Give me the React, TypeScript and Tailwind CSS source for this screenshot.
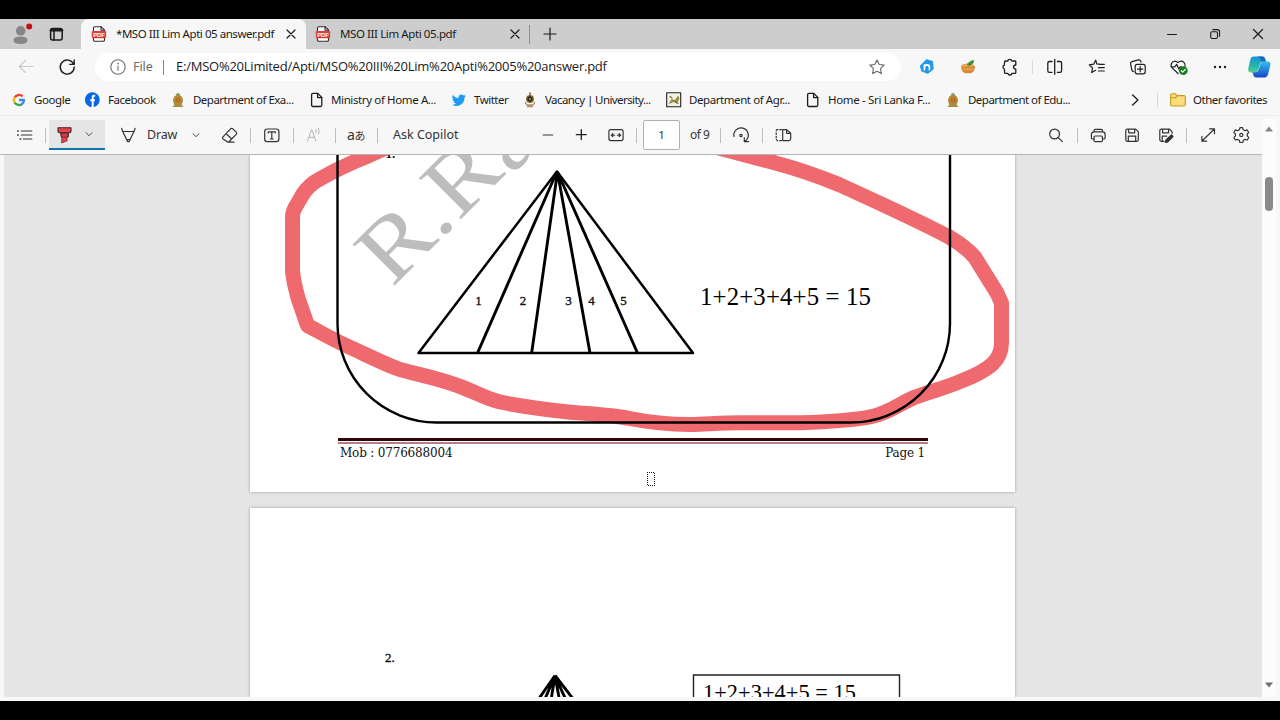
import type { ReactNode } from "react";

type IconProps = {
  cx: number;
  cy: number;
  size?: number;
  sw?: number;
  className?: string;
  children: ReactNode;
};

/* Icon whose drawing is written in window coordinates around its centre. */
function Icon({ cx, cy, size = 20, sw = 1.1, className = "", children }: IconProps) {
  const h = size / 2;
  return (
    <svg
      width={size}
      height={size}
      viewBox={`${cx - h} ${cy - h} ${size} ${size}`}
      fill="none"
      stroke="currentColor"
      strokeWidth={sw}
      strokeLinecap="round"
      strokeLinejoin="round"
      className={`shrink-0 ${className}`}
    >
      {children}
    </svg>
  );
}

function PdfIcon({ className }: { className: string }) {
  return (
    <Icon cx={99} cy={34} size={16} className={className}>
      <path d="M93.5 31V28q0-1.3 1.3-1.3h6.2l3.5 3.5V40q0 1.3-1.3 1.3h-8.4q-1.3 0-1.3-1.3z" fill="#fff" stroke="#33272a" />
      <path d="M101 26.7v3.5h3.5" stroke="#33272a" />
      <rect x="91.8" y="31" width="14.4" height="7.2" rx="1.2" fill="#dc3c46" stroke="none" />
      <text x="99" y="37" textAnchor="middle" fontSize="5.8" fontWeight="700" fill="#fff" stroke="none" fontFamily="Liberation Sans, sans-serif">PDF</text>
    </Icon>
  );
}

function CloseIcon({ className, r = 4 }: { className: string; r?: number }) {
  return (
    <Icon cx={0} cy={0} size={16} sw={1.2} className={className}>
      <path d={`M${-r} ${-r}L${r} ${r}M${r} ${-r}L${-r} ${r}`} />
    </Icon>
  );
}

function Crest({ className }: { className: string }) {
  return (
    <Icon cx={8} cy={8} size={16} className={className}>
      <path d="M4.5 4.5Q8 1.5 11.5 4.5L13 9l-1.5 5h-7L3 9z" fill="#9fa06b" stroke="none" />
      <circle cx="8" cy="3" r="2" fill="#8a9a70" stroke="none" />
      <circle cx="8" cy="7.8" r="4.2" fill="#c4862a" stroke="#a9883a" />
      <circle cx="8" cy="7.8" r="1.8" fill="#d97a2c" stroke="#8b5a2a" strokeWidth=".7" />
      <path d="M3.5 14.3h9M5.5 12.5h5" stroke="#a58d3b" strokeWidth="1.4" />
    </Icon>
  );
}

function SmallCrest({ className }: { className: string }) {
  return (
    <Icon cx={8} cy={8} size={16} className={className}>
      <path d="M8 1v2.5" stroke="#7b6243" strokeWidth="1.6" />
      <circle cx="8" cy="7" r="3.3" fill="#2e2a20" stroke="#8f6f3e" strokeWidth="1.3" />
      <circle cx="8" cy="7" r="1" fill="#c8a44a" stroke="none" />
      <path d="M3.6 10.5Q4 13 6 13h4q2 0 2.4-2.5M5.5 14.6h5" stroke="#b0916c" strokeWidth="1.5" />
    </Icon>
  );
}

function PageIcon({ className }: { className: string }) {
  return (
    <Icon cx={8} cy={8} size={16} sw={1.3} className={className}>
      <path d="M4 1.4h4.8l4 4V13q0 1.5-1.5 1.5H4Q2.6 14.5 2.6 13V2.8Q2.6 1.4 4 1.4z" />
      <path d="M8.6 1.6v4h4" />
    </Icon>
  );
}

function Rule({ className }: { className: string }) {
  return <div className={`w-px shrink-0 ${className}`} />;
}

function Label({ className, children }: { className: string; children: ReactNode }) {
  return <span className={`shrink-0 whitespace-nowrap ${className}`}>{children}</span>;
}

function Bookmark({ className, icon, children }: { className: string; icon: ReactNode; children: ReactNode }) {
  return (
    <div className={`flex shrink-0 items-center ${className}`}>
      {icon}
      <span className="whitespace-nowrap">{children}</span>
    </div>
  );
}

function TabStrip() {
  return (
    <div className="flex h-[30px] shrink-0 items-center bg-[#cdcdcd] text-[11.5px] text-[#1b1b1b]">
      <Icon cx={21} cy={34} size={24} className="ml-[9px]">
        <circle cx="20.7" cy="30.8" r="4.8" fill="#868686" stroke="none" />
        <path d="M13.5 40q0-3.5 7-3.5t7 3.5q0 4-7 4t-7-4z" fill="#868686" stroke="none" />
        <circle cx="29.2" cy="26.6" r="3" fill="#c80d16" stroke="none" />
      </Icon>
      <Icon cx={56} cy={34} sw={1.5} className="ml-[13px]">
        <rect x="50.6" y="28.4" width="11.6" height="11.6" rx="2" />
        <path d="M51 30.3h11" strokeWidth="2.6" />
        <path d="M54 31v9" />
      </Icon>
      <div className="ml-[15px] flex h-full w-[225px] shrink-0 items-center rounded-t-[8px] bg-[#f7f7f7]">
        <PdfIcon className="ml-[10px]" />
        <Label className="ml-[9px] w-[160px] tracking-[-0.45px]">*MSO III Lim Apti 05 answer.pdf</Label>
        <CloseIcon className="ml-[7px]" />
      </div>
      <PdfIcon className="ml-[9px]" />
      <Label className="ml-[9px] w-[160px] tracking-[-0.4px]">MSO III Lim Apti 05.pdf</Label>
      <CloseIcon className="ml-[7px]" />
      <Rule className="ml-[6px] h-[19px] bg-[#8f8f8f]" />
      <Icon cx={0} cy={0} size={16} sw={1.2} className="ml-[12px]">
        <path d="M-6 0H6M0-6V6" />
      </Icon>
      <Icon cx={0} cy={0} size={16} className="ml-auto">
        <path d="M-4.5 .5H4.5" />
      </Icon>
      <Icon cx={0} cy={0} size={16} className="ml-[27px]">
        <rect x="-4.3" y="-2.3" width="6.8" height="6.8" rx="1.5" />
        <path d="M-2.2-4.4H2.2Q4.6-4.4 4.6-2V2.3" />
      </Icon>
      <CloseIcon className="mr-[14px] ml-[27px]" r={4.5} />
    </div>
  );
}

function AddressRow() {
  return (
    <div className="flex h-9 shrink-0 items-center text-[#1f1f1f]">
      <Icon cx={26} cy={67} className="ml-[16px] text-[#c9c9c9]">
        <path d="M33 66.5H19.3M25.5 60.5l-6.3 6 6.3 6" />
      </Icon>
      <Icon cx={67} cy={67} sw={1.4} className="ml-[21px]">
        <path d="M73.6 64.2A7 7 0 1 0 74.2 67M74.2 60v4.4h-4.4" />
      </Icon>
      <div className="ml-[18px] flex h-7 w-[806px] shrink-0 items-center rounded-full bg-white">
        <Icon cx={118} cy={67} size={16} className="ml-[15px] text-[#6f6f6f]">
          <circle cx="118" cy="67" r="7.2" />
          <path d="M118 66v4.3" />
          <circle cx="118" cy="63.6" r=".4" />
        </Icon>
        <Label className="ml-[7px] w-[22px] text-[12.5px] tracking-[-0.1px] text-[#6a6a6a]">File</Label>
        <Rule className="ml-[8px] h-[15px] bg-[#858585]" />
        <Label className="ml-[12px] font-['Open_Sans','Noto_Sans',sans-serif] text-[13px] tracking-[-0.24px] text-[#1a1a1a]">
          E:/MSO%20Limited/Apti/MSO%20III%20Lim%20Apti%2005%20answer.pdf
        </Label>
        <Icon cx={0} cy={0} className="mr-[14px] ml-auto text-[#666]">
          <path d="M0-7.1 2.2-2.5 7.1-1.9 3.5 1.6 4.4 6.6 0 4.2-4.4 6.6-3.5 1.6-7.1-1.9-2.2-2.5z" />
        </Icon>
      </div>
      <Icon cx={927} cy={67} className="ml-[16px]">
        <path d="M926.500 59.800l6 1.800.6 7.500-5.500 4.200-5.600-2.200-1.600-5z" fill="#2199e8" stroke="#2199e8" />
        <path d="M924.400 65v4.600M924.400 67.400q.3-2.600 2.800-2.600 2.200 0 2.200 2.400v2.200" stroke="#fff" strokeWidth="1.700" />
      </Icon>
      <Icon cx={968} cy={67} className="ml-[21px]">
        <path d="M961 66.5h14q-.3 6.5-5 6.8h-4.3q-4.2-.3-4.7-6.8z" fill="#d98a35" stroke="none" />
        <path d="M961.5 66q1.5-2.6 4-1.4 2.4-2 4.6 0 2.8-1 4.4 1.6z" fill="#efc24a" stroke="#dc7a3c" strokeWidth=".7" />
        <path d="M967.5 65q1-4 6.3-4.5-.3 4-4.4 4.9z" fill="#3c963a" stroke="#2f7f30" strokeWidth=".6" />
        <path d="M963.5 69.3h9" stroke="#e9b65d" />
      </Icon>
      <Icon cx={1010} cy={67} sw={1.3} className="ml-[22px]">
        <path d="M1005.2 61h2.6q.2-1.6 2-1.6t2 1.6h3.2q.8 0 .8.8v3.2q-2.3.2-2.3 2.1t2.3 2.1v3.3q0 .9-.9.9h-3q-.2 1.6-2 1.6t-2-1.6h-2.5q-.9 0-.9-.9v-3.3q-1.500-.3-1.500-2.1t1.500-2.1v-3.1q0-.9.7-.9z" />
      </Icon>
      <Rule className="ml-[12px] h-[14px] bg-[#dadada]" />
      <Icon cx={1055} cy={67} sw={1.3} className="ml-[12px]">
        <path d="M1052 61.5h-2.6q-1.6 0-1.6 1.6v7.6q0 1.6 1.6 1.6h2.6M1057.4 61.5h2.6q1.6 0 1.6 1.6v7.6q0 1.6-1.6 1.6h-2.6M1054.7 59.3v15" />
      </Icon>
      <Icon cx={1097} cy={67} sw={1.2} className="ml-[22px]">
        <path d="M1099.4 64.2 1096.6 63.8 1095.8 60 1093.7 64.2 1089.3 64.8 1092.5 67.9 1091.7 72.6 1095.6 70.3M1099.5 64.4h4.8M1098.5 67.7h5.8M1098.5 71h5.8" />
      </Icon>
      <Icon cx={1138} cy={67} sw={1.2} className="ml-[21px]">
        <rect x="1135.2" y="64.4" width="10" height="9.4" rx="2" />
        <path d="M1140.2 66.4v5.4M1137.5 69.1h5.4M1133.4 71.6q-1.3-.4-1.6-1.8l-1.2-6q-.3-1.7 1.4-2.1l6.4-1.8q1.7-.4 2.3 1.3l.3 1" />
      </Icon>
      <Icon cx={1179} cy={67} sw={1.2} className="ml-[21px]">
        <path d="M1178 73.5l-5.8-5.6q-2.2-2.8 0-5.5 2.8-2.7 5.8.2 3-2.9 5.9-.2 1.8 2 1 4.2M1171 66.8h4l1.6-2.5 2.3 4.7 1.3-2.2h1.6" />
        <circle cx="1183.3" cy="70.6" r="4.4" fill="#15811e" stroke="none" />
        <path d="M1181.3 70.7l1.4 1.4 2.5-2.6" stroke="#fff" />
      </Icon>
      <Icon cx={1220} cy={67} className="ml-[21px]">
        <g fill="currentColor" stroke="none">
          <circle cx="1215" cy="67" r="1.2" />
          <circle cx="1220" cy="67" r="1.2" />
          <circle cx="1225" cy="67" r="1.2" />
        </g>
      </Icon>
      <Icon cx={1259} cy={67} size={24} className="ml-[17px]">
        <defs>
          <linearGradient id="cpA" x1="0" y1="0" x2="0" y2="1">
            <stop offset="0" stopColor="#1b8fd8" />
            <stop offset=".55" stopColor="#22b3b0" />
            <stop offset="1" stopColor="#55cf90" />
          </linearGradient>
          <linearGradient id="cpB" x1="0" y1="0" x2="0" y2="1">
            <stop offset="0" stopColor="#35c1ef" />
            <stop offset="1" stopColor="#1746c8" />
          </linearGradient>
        </defs>
        <g stroke="none">
          <path d="M1254 56.4h8.2q2.2 0 2.9 2.4l.8 2.8h-3.2q-2 0-2.6 2l-1.8 6.5q-.7 2.3-3 2.3h-4.2q-3.6 0-2.8-4l2-8.6q.8-3.4 3.7-3.4z" fill="url(#cpA)" />
          <path d="M1264.4 77.4h-8.3q-2 0-2.7-2.2l-.9-2.9h3.3q2 0 2.7-2.1l1.9-6.5q.7-2.2 2.9-2.2h4.4q3.4 0 2.6 3.8l-2.1 8.5q-.9 3.6-3.8 3.6z" fill="url(#cpB)" />
          <path d="M1254 56.4h8.2q2.2 0 2.9 2.4l.8 2.8h-4.5q-1.2-4.6-4-5.2z" fill="#1769c5" />
        </g>
      </Icon>
    </div>
  );
}

function BookmarksRow() {
  return (
    <div className="flex h-[30px] shrink-0 items-center text-[11.5px] text-[#1b1b1b]">
      <Bookmark
        className="ml-[11px] w-[60px] gap-[7px] tracking-[-0.4px]"
        icon={
          <Icon cx={8} cy={8} size={16} sw={2.4} className="[&_path]:[stroke-linecap:butt]">
            <path d="M11.6 4.4A4.9 4.9 0 0 0 3.8 5.4" stroke="#ea4335" />
            <path d="M3.8 5.2A4.9 4.9 0 0 0 3.8 10.8" stroke="#fbbc05" />
            <path d="M3.7 10.5A4.9 4.9 0 0 0 11.2 11.8" stroke="#34a853" />
            <path d="M11 12A4.9 4.9 0 0 0 12.9 8H8" stroke="#4285f4" />
          </Icon>
        }
      >
        Google
      </Bookmark>
      <Bookmark
        className="ml-[13px] w-[72px] gap-[8px] tracking-[-0.5px]"
        icon={
          <Icon cx={8} cy={8} size={16}>
            <circle cx="8.3" cy="7.7" r="7.4" fill="#0866e8" stroke="none" />
            <path d="M11.2 3.8H10Q8.7 3.8 8.7 5.2V15M6.3 8.3h4.6" stroke="#fff" strokeWidth="2" strokeLinecap="butt" />
          </Icon>
        }
      >
        Facebook
      </Bookmark>
      <Bookmark className="ml-[14px] w-[125px] gap-[7px] tracking-[-0.52px]" icon={<Crest className="" />}>Department of Exa...</Bookmark>
      <Bookmark className="ml-[14px] w-[129px] gap-[6px] tracking-[-0.38px]" icon={<PageIcon className="" />}>Ministry of Home A...</Bookmark>
      <Bookmark
        className="ml-[13px] w-[58px] gap-[7px] tracking-[-0.5px]"
        icon={
          <Icon cx={12} cy={12} size={24} className="size-[14px]! mx-px">
            <path d="M23.6 4.9c-.9.4-1.8.6-2.8.8 1-.6 1.8-1.6 2.2-2.7-1 .6-2 1-3.1 1.2a4.9 4.9 0 0 0-8.4 4.5C7.4 8.5 3.8 6.5 1.4 3.5a4.9 4.9 0 0 0 1.5 6.6c-.8 0-1.6-.2-2.2-.6v.1c0 2.4 1.7 4.4 3.9 4.8-.7.2-1.5.2-2.2.1a4.9 4.9 0 0 0 4.6 3.4A9.9 9.9 0 0 1 0 20a14 14 0 0 0 7.5 2.2c9.1 0 14-7.5 14-14v-.6c1-.7 1.8-1.6 2.1-2.7z" fill="#1d9bf0" stroke="none" />
          </Icon>
        }
      >
        Twitter
      </Bookmark>
      <Bookmark className="ml-[13px] w-[130px] gap-[7px] tracking-[-0.58px]" icon={<SmallCrest className="" />}>Vacancy | University...</Bookmark>
      <Bookmark
        className="ml-[14px] w-[125px] gap-[7px] tracking-[-0.42px]"
        icon={
          <Icon cx={8} cy={8} size={16}>
            <rect x=".7" y=".7" width="14" height="14" fill="#f3f0e4" stroke="#222" />
            <path d="M2.5 12l3-5 3.5 1 3-4.5 1.5 3-2.500 5-3-1.5z" fill="#9b8d45" stroke="none" />
            <path d="M4 4.5l2 1.5M9 9.5l3 2" stroke="#5f6f35" />
          </Icon>
        }
      >
        Department of Agr...
      </Bookmark>
      <Bookmark className="ml-[14px] w-[126px] gap-[7px] tracking-[-0.33px]" icon={<PageIcon className="" />}>Home - Sri Lanka F...</Bookmark>
      <Bookmark className="ml-[14px] w-[126px] gap-[7px] tracking-[-0.52px]" icon={<Crest className="" />}>Department of Edu...</Bookmark>
      <Icon cx={0} cy={0} size={16} sw={1.3} className="ml-[56px]">
        <path d="M-2.3-5 2.9 0-2.3 5" />
      </Icon>
      <Rule className="ml-[14px] h-[14px] bg-[#d6d6d6]" />
      <Bookmark
        className="ml-[12px] gap-[7px] tracking-[-0.5px]"
        icon={
          <Icon cx={8} cy={8} size={16}>
            <path d="M.6 3.3Q.6 1.8 2.1 1.8H5.4L7.2 3.6H13.9Q15.3 3.6 15.3 5V12.6Q15.3 14 13.9 14H2.1Q.6 14 .6 12.6z" fill="#fbdd7b" stroke="#c49a28" />
            <path d="M.8 5.8H5.2L7.2 3.8" stroke="#c49a28" />
          </Icon>
        }
      >
        Other favorites
      </Bookmark>
    </div>
  );
}

function Chevron({ className }: { className: string }) {
  return (
    <Icon cx={0} cy={0} size={10} sw={0.9} className={className}>
      <path d="M-3-1.3 0 1.7 3-1.3" />
    </Icon>
  );
}

const ruleTone = "h-[15px] bg-[#bdbdbd]";

function PdfToolbar() {
  return (
    <div className="flex h-[39px] shrink-0 items-center border-b border-[#b4b4b4] text-[12.5px] text-[#333]">
      <Icon cx={25} cy={135} sw={1.2} className="ml-[15px]">
        <path d="M21.3 131h10.5M21.3 135h10.5M23.3 139h8.5" />
        <path d="M17.8 131h.3M17.8 135h.3M20.3 139h.3" strokeWidth="1.7" />
      </Icon>
      <Rule className={`ml-[10px] ${ruleTone}`} />
      <div className="ml-[3px] flex h-[30px] w-[56px] shrink-0 items-center border-b-2 border-[#1176ad] bg-[#e5e5e5]">
        <Icon cx={64} cy={134} className="ml-[5px]">
          <path d="M58 127.800h13v3.400q0 1.500-1.500 1.500h-10q-1.500 0-1.500-1.500z" fill="#e2474e" stroke="#4b2225" />
          <path d="M60.600 133h7.800v3.300l-.9 1h-6z" fill="#c8404a" stroke="#4b2225" />
          <path d="M61.800 137.500h5.200v3.200l-5.200 2z" fill="#e2474e" stroke="#a93038" />
        </Icon>
        <Chevron className="ml-[10px]" />
      </div>
      <Icon cx={128} cy={135} sw={1.2} className="ml-[13px]">
        <path d="M121.600 128.400l1.100 3.100h11.300l1.100-3.100M122.700 131.500l5 10.200h1.300l5-10.200M126.900 139.600h2.900" />
      </Icon>
      <Label className="ml-[9px] w-[31px] tracking-[-0.2px]">Draw</Label>
      <Chevron className="ml-[13px]" />
      <Icon cx={230} cy={135} sw={1.2} className="ml-[19px]">
        <path d="M223 136.8l7.600-8q1.100-1 2.200 0l3.400 3.400q1 1 0 2.100l-7 7.200q-1.100 1-2.300 0l-3.900-2.600q-1-1 0-2.100zM226.300 133.800l5.400 5.200M228 142.200h6" />
      </Icon>
      <Rule className={`ml-[10px] ${ruleTone}`} />
      <Icon cx={272} cy={135} sw={1.2} className="ml-[11px]">
        <rect x="264.7" y="129" width="14.2" height="12.6" rx="2.6" />
        <path d="M268.3 133v-1.2h7v1.2M271.8 131.8v7.2M270.3 139h3" />
      </Icon>
      <Rule className={`ml-[11px] ${ruleTone}`} />
      <Icon cx={314} cy={135} sw={1} className="ml-[10px] text-[#b5b5b5]">
        <path d="M307.5 141l4.2-11.5 4.2 11.5M309 137.3h5.4M316 129.2q1 1.6 0 3.4M318.4 128q2 2.8 0 6" />
      </Icon>
      <Rule className={`ml-[11px] ${ruleTone}`} />
      <span className="ml-[10px] flex w-5 shrink-0 items-center justify-center text-[14px] leading-none tracking-[-0.5px]">
        a<span className="font-['Noto_Sans_CJK_JP',sans-serif] text-[11px] leading-none">あ</span>
      </span>
      <Rule className={`ml-[11px] ${ruleTone}`} />
      <Label className="ml-[15px] w-[67px]">Ask Copilot</Label>
      <Icon cx={548} cy={135} className="ml-[78px]">
        <path d="M543.2 135h9.6" />
      </Icon>
      <Icon cx={581} cy={135} sw={1.3} className="ml-[13px] text-[#1c1c1c]">
        <path d="M576.3 134.6h10M581.3 129.6v10" />
      </Icon>
      <Icon cx={616} cy={135} sw={1.2} className="ml-[15px]">
        <rect x="608.9" y="129.6" width="14.2" height="11" rx="2" />
        <path d="M611.6 135.1h3M617.4 135.1h3M612.8 133.6l-1.4 1.5 1.4 1.5M619.2 133.6l1.4 1.5-1.4 1.5" />
      </Icon>
      <Rule className={`ml-[10px] ${ruleTone}`} />
      <div className="ml-[6px] flex h-[30px] w-[37px] shrink-0 items-center justify-center rounded-[2px] border border-[#b0b0b0] bg-white text-[11.5px]">1</div>
      <Label className="ml-[10px] w-[20px] text-[12px] tracking-[-0.5px]">of 9</Label>
      <Rule className={`ml-[10px] ${ruleTone}`} />
      <Icon cx={741} cy={135} sw={1.2} className="ml-[10px]">
        <path d="M734 136.5A7.2 7.2 0 1 1 746.5 139.8L744.8 141.5M744.3 137.6v4h4.2" />
        <circle cx="741" cy="135.5" r="1.2" />
      </Icon>
      <Rule className={`ml-[11px] ${ruleTone}`} />
      <Icon cx={783} cy={135} sw={1.2} className="ml-[10px]">
        <path d="M781.5 129.6h-1.8M778 129.6h-.7q-1 .2-1.100 1.2M776.2 132.8v1.6M776.2 136.3v1.6M776.4 139.6q.3.9 1.2 1M779.7 140.6h1.8" />
        <path d="M782.7 129.6h4l4 3.6v5.6q0 1.8-1.8 1.8h-6.2zM786.6 129.8v3.5h4" />
      </Icon>
      <Icon cx={1056} cy={135} sw={1.2} className="ml-[253px]">
        <circle cx="1054.6" cy="134" r="4.9" />
        <path d="M1058.2 137.6l4.2 4" />
      </Icon>
      <Rule className={`ml-[11px] ${ruleTone}`} />
      <Icon cx={1098} cy={135} sw={1.2} className="ml-[10px]">
        <path d="M1094 131.8v-1.2q0-1.3 1.3-1.3h5.9q1.3 0 1.3 1.3v1.2M1094 139h-1.3q-1.3 0-1.3-1.3v-3.2q0-2.6 2.6-2.6h8.6q2.5 0 2.5 2.6v3.2q0 1.3-1.3 1.3h-1.3" />
        <rect x="1094" y="136" width="8.5" height="5.6" rx="1.2" />
      </Icon>
      <Icon cx={1132} cy={135} sw={1.2} className="ml-[14px]">
        <path d="M1127.3 129.2h8.4l2.6 2.6v8q0 1.5-1.5 1.5h-9.5q-1.5 0-1.5-1.5v-9.1q0-1.5 1.5-1.5zM1128.7 129.4v3.4h6v-3.4M1128.3 141v-4.8h7.4v4.8" />
      </Icon>
      <Icon cx={1166} cy={135} sw={1.2} className="ml-[14px]">
        <path d="M1164 141.3h-2.7q-1.5 0-1.5-1.5v-9.1q0-1.5 1.5-1.5h8.4l2.4 2.6v1.5M1162.6 129.4v3.4h6v-3.4M1162.2 141v-4.8h4.5" />
        <path d="M1171.6 135.2l-5.4 5-.6 1.8 2-.4 5-5.1" strokeWidth="1.9" />
      </Icon>
      <Rule className={`ml-[10px] ${ruleTone}`} />
      <Icon cx={1208} cy={135} sw={1.2} className="ml-[11px]">
        <path d="M1202 141l12.4-12M1209.6 128.9h4.9v4.8M1201.9 136.4v4.8h4.8" />
      </Icon>
      <Icon cx={1241} cy={134.5} sw={1.2} className="ml-[13px]">
        <path d="M1240 127.2h2.6l.6 2.1 1.6.9 2.2-.8 1.7 2.4-1.4 1.7v1.9l1.5 1.7-1.6 2.4-2.3-.6-1.6.9-.6 2.2h-2.8l-.6-2.2-1.6-.9-2.3.6-1.5-2.4 1.5-1.7v-1.9l-1.5-1.7 1.6-2.4 2.2.8 1.6-.9z" />
        <circle cx="1241.3" cy="134.4" r="1.6" />
      </Icon>
    </div>
  );
}

function FirstPage() {
  return (
    <div className="relative h-[337px] w-[765px] shrink-0 bg-white shadow-[0_0_3px_rgba(0,0,0,0.3)]">
      <svg className="absolute inset-0 overflow-hidden" width="765" height="337" viewBox="250 155 765 337" fill="none" fontFamily="Liberation Serif, serif">
        <text transform="translate(392 288) rotate(-45) scale(1.14 1)" fontSize="89.500" fill="#bdbdbd">
          R.R<tspan dx="2" dy="5">a</tspan>
        </text>
        <path
          d="M388 147L368 156C345 165 330 173 318 180Q309 185 303 194L296 206Q292.500 211 292.500 218V272Q294 284 298 298L307.500 325.500C318 331 330 338 345 345C365 354 384 364 400 369.500C420 375 436 378 453 384C472 390 486 399 500 402C525 407 550 410 573 412.500C595 414 610 415 627 418C647 422 665 424.500 690 424.500C708 424 722 422.700 740 422.700H800C826 422 850 421 872 416.500C892 412 903 401 917 396.500C932 391 948 387 960 381.500C975 376 985 371 993 363.500Q1001.500 355 1001.500 343V303L997 293L975 257.500Q966 247 950 237.500C915 219 877 202 840 185C816 175 795 168 770 161.500L715 147"
          stroke="#ee6a6f"
          strokeWidth="15"
          strokeLinejoin="round"
        />
        <text x="385.500" y="157.500" fontSize="13" fontWeight="700" fill="#111">1.</text>
        <g stroke="#000" strokeWidth="2.500" strokeLinejoin="round">
          <path d="M337.500 150V324A99 99 0 0 0 436.500 422.500H851A99 99 0 0 0 950 324V150" strokeWidth="2.400" />
          <path d="M557 171.500L418.500 353H693z" />
          <path d="M557 171.500L477.500 353M557.500 172L531.500 354M557.500 172L590 353M557.500 172L637.500 353" strokeWidth="2.900" />
        </g>
        <g fontSize="13" fill="#111" stroke="#111" strokeWidth=".35" textAnchor="middle">
          <text x="478.500" y="305">1</text>
          <text x="523" y="305">2</text>
          <text x="568.500" y="305">3</text>
          <text x="591.500" y="305">4</text>
          <text x="623.500" y="305">5</text>
        </g>
        <text x="700" y="305" fontSize="24.800" textLength="171" fill="#000">1+2+3+4+5 = 15</text>
        <rect x="647.500" y="472.500" width="7" height="13" stroke="#111" strokeDasharray="1 1" strokeDashoffset=".5" shapeRendering="crispEdges" />
      </svg>
      <div className="mt-[283px] ml-[88px] w-[590px]">
        <div className="h-[3px] bg-[#30060b]" />
        <div className="mt-px h-[2px] bg-[#b58083]" />
        <div className="flex justify-between pr-[3px] pl-[2px] font-['DejaVu_Serif',serif] text-[12px] leading-[18px] tracking-[-0.18px] text-[#111]">
          <span>Mob : 0776688004</span>
          <span>Page 1</span>
        </div>
      </div>
    </div>
  );
}

function SecondPage() {
  return (
    <div className="h-[189px] w-[765px] shrink-0 bg-white shadow-[0_0_3px_rgba(0,0,0,0.3)]">
      <svg width="765" height="189" viewBox="250 508 765 189" fill="none" fontFamily="Liberation Serif, serif" className="block overflow-hidden">
        <text x="385" y="661.500" fontSize="13" fill="#111" stroke="#111" strokeWidth=".35">2.</text>
        <g stroke="#000" strokeWidth="2.900">
          <path d="M555 675.500L538 700M555 676L544.500 700M555 676L551 700M555 676L559.500 700M555 676L566 700M555 675.500L574 700" />
          <path d="M693.500 702V675H899.500V702" strokeWidth="1.400" stroke="#222" />
        </g>
        <text x="703" y="699.500" fontSize="22.300" textLength="153" fill="#000">1+2+3+4+5 = 15</text>
      </svg>
    </div>
  );
}

export default function App() {
  return (
    <div className="flex h-[720px] w-[1280px] flex-col overflow-hidden bg-black py-[19px] font-['Noto_Sans','Open_Sans',sans-serif]">
      <div className="flex h-[682px] flex-col bg-[#f7f7f7]">
        <TabStrip />
        <AddressRow />
        <BookmarksRow />
        <div className="flex h-[582px] shrink-0 border-t border-[#ececec]">
          <div className="flex w-[1262px] flex-col">
            <PdfToolbar />
            <div className="ml-1 flex h-[542px] flex-col gap-4 overflow-hidden bg-[#e5e5e5] pl-[246px]">
              <FirstPage />
              <SecondPage />
            </div>
          </div>
          <div className="mt-[3px] flex h-[578px] w-[14px] flex-col items-center bg-[#fcfcfc]">
            <svg width="10" height="6" className="mt-[7px]">
              <path d="M5 .5 9 5.500H1z" fill="#858585" />
            </svg>
            <div className="mt-[45px] h-[34px] w-[8px] rounded-full bg-[#8a8a8a]" />
            <svg width="10" height="6" className="mt-auto mb-[9px]">
              <path d="M5 5.500 9 .5H1z" fill="#707070" />
            </svg>
          </div>
        </div>
      </div>
    </div>
  );
}
